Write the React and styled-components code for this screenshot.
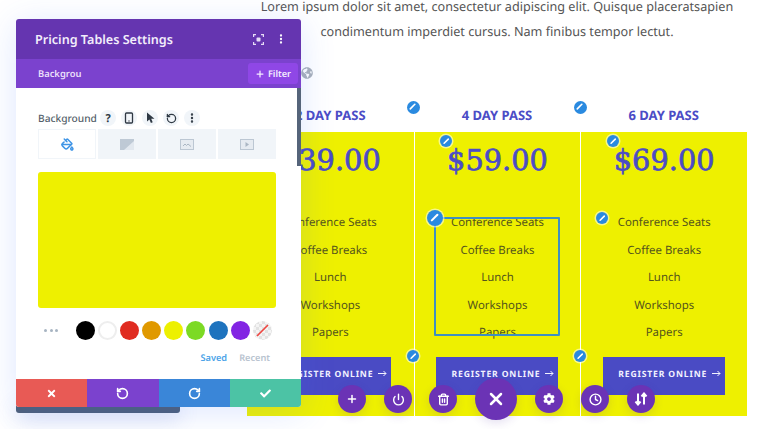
import React from 'react';
import styled, { createGlobalStyle } from 'styled-components';
import { Plus, Power, Trash2, X, Clock, RotateCcw, RotateCw, Smartphone, MoreVertical, PaintBucket } from 'lucide-react';
import { FaGlobeAmericas, FaCog, FaTimes, FaCheck } from 'react-icons/fa';

const Global = createGlobalStyle`
  html, body { margin: 0; padding: 0; background: #fff; }
  body { width: 768px; height: 429px; overflow: hidden; font-family: "Noto Sans", sans-serif; text-rendering: geometricPrecision; }
`;
const Page = styled.div`
  position: relative;
  width: 768px;
  height: 429px;
  overflow: hidden;
  padding-left: 247px;
  box-sizing: border-box;
`;
const Content = styled.main`
  width: 500px;
  display: flex;
  flex-direction: column;
`;
const Intro = styled.div`
  display: flex;
  flex-direction: column;
  gap: 13px;
  font-size: 12.65px;
  line-height: 12px;
  color: #555;
  text-align: center;
  white-space: nowrap;
`;
const IntroLine = styled.p`
  margin: 0;
`;
const Heads = styled.div`
  display: grid;
  grid-template-columns: repeat(3, 1fr);
  margin-top: 52px;
  height: 43px;
  align-items: center;
`;
const Head = styled.h3`
  margin: 8px 0 0;
  font-size: 13px;
  font-weight: 700;
  color: #4b4cc6;
  text-align: center;
`;
const Table = styled.div`
  display: grid;
  grid-template-columns: repeat(3, 1fr);
  height: 284px;
  background: #eef000;
`;
const Column = styled.div`
  display: flex;
  flex-direction: column;
  align-items: center;
  border-left: ${p => (p.$first ? 'none' : '1px solid #fff')};
`;
const Price = styled.div`
  margin-top: 11px;
  height: 34px;
  font-family: "DejaVu Serif", serif;
  font-size: 28.8px;
  line-height: 34px;
  font-weight: 400;
  -webkit-text-stroke: 0.7px #4b4cc6;
  color: #4b4cc6;
`;
const Features = styled.ul`
  list-style: none;
  margin: 32px 0 0;
  padding: 0;
  text-align: center;
`;
const Feature = styled.li`
  height: 27.5px;
  line-height: 27.5px;
  font-size: 11.4px;
  color: #55551c;
  white-space: nowrap;
`;
const Register = styled.div`
  margin-top: 10px;
  width: 122px;
  height: 38px;
  box-sizing: border-box;
  padding: 0 4px 4px 0;
  background: #4a4bc4;
  color: #f2f2ff;
  display: flex;
  align-items: center;
  justify-content: flex-end;
  gap: 5px;
  font-size: 8.6px;
  font-weight: 700;
  letter-spacing: 0.85px;
  white-space: nowrap;
`;
const Arrow = styled.svg`
  flex: none;
`;

const Pin = styled.span`
  position: absolute;
  left: ${p => p.$x - p.$size / 2}px;
  top: ${p => p.$y - p.$size / 2}px;
  width: ${p => p.$size}px;
  height: ${p => p.$size}px;
  border-radius: 50%;
  background: #2a8ae0;
  box-shadow: 0 0 0 1.5px rgba(255, 255, 255, .55);
  display: flex;
  align-items: center;
  justify-content: center;
`;
const SelectBox = styled.div`
  position: absolute;
  left: 434px;
  top: 217px;
  width: 122px;
  height: 115px;
  border: 2px solid #3f8fc0;
  border-radius: 1px;
`;
const Fab = styled.span`
  position: absolute;
  left: ${p => p.$x - p.$size / 2}px;
  top: ${p => p.$y - p.$size / 2}px;
  width: ${p => p.$size}px;
  height: ${p => p.$size}px;
  border-radius: 50%;
  background: #6b33b5;
  color: #fff;
  display: flex;
  align-items: center;
  justify-content: center;
  box-shadow: 0 3px 10px rgba(80, 50, 160, .15);
`;

const GlobeBadge = styled.span`
  position: absolute;
  left: 292px;
  top: 59px;
  width: 28px;
  height: 28px;
  border-radius: 50%;
  background: #fff;
  color: #a9b0b9;
  display: flex;
  align-items: center;
  justify-content: flex-end;
  padding-right: 7px;
  box-sizing: border-box;
`;
const Under = styled.div`
  position: absolute;
  left: 16px;
  top: 400px;
  width: 164px;
  height: 13px;
  border-radius: 3px;
  background: #4e5f78;
  box-shadow: 0 6px 20px rgba(60, 90, 200, .2);
`;
const Panel = styled.section`
  position: absolute;
  left: 16px;
  top: 19px;
  width: 285px;
  height: 388px;
  display: flex;
  flex-direction: column;
  background: #fff;
  border-radius: 3px;
  box-shadow: 0 5px 34px rgba(60, 110, 255, .17);
`;
const TitleBar = styled.header`
  height: 40px;
  flex: none;
  background: #6535b0;
  border-radius: 3px 3px 0 0;
  color: #fff;
  display: flex;
  align-items: center;
  padding: 0 14px 0 19px;
`;
const Title = styled.h2`
  margin: 0;
  flex: 1;
  font-size: 12.6px;
  font-weight: 600;
  color: #f2edfb;
`;
const TitleIcons = styled.div`
  display: flex;
  align-items: center;
  gap: 11px;
`;
const TabBar = styled.div`
  height: 29px;
  flex: none;
  background: #7b42ce;
  display: flex;
  align-items: center;
  justify-content: space-between;
  padding: 0 3px 0 22px;
`;
const TabName = styled.span`
  font-size: 9.4px;
  font-weight: 600;
  color: #eadffa;
`;
const FilterBtn = styled.span`
  width: 50px;
  height: 21px;
  background: #8f47e6;
  border-radius: 3px;
  color: #f4ecff;
  font-size: 9.2px;
  font-weight: 600;
  display: flex;
  align-items: center;
  justify-content: center;
  gap: 3px;
`;
const Body = styled.div`
  position: relative;
  flex: 1;
  padding: 0 25px 0 22px;
  display: flex;
  flex-direction: column;
`;
const Scrollbar = styled.span`
  position: absolute;
  right: 0;
  top: 0;
  width: 4px;
  height: 78px;
  background: #55647a;
`;
const LabelRow = styled.div`
  margin-top: 20px;
  height: 20px;
  display: flex;
  align-items: center;
`;
const Label = styled.span`
  width: 62px;
  font-size: 10.2px;
  font-weight: 500;
  color: #555f6b;
`;
const Hint = styled.span`
  width: 16px;
  height: 16px;
  border-radius: 50%;
  background: #f1f5f9;
  color: #2f3944;
  margin-right: 5px;
  font-size: 11px;
  font-weight: 700;
  display: flex;
  align-items: center;
  justify-content: center;
`;
const Tabs = styled.div`
  margin-top: 1px;
  display: grid;
  grid-template-columns: repeat(4, 1fr);
  gap: 2px;
  height: 30px;
`;
const TabCell = styled.span`
  background: ${p => (p.$on ? '#fff' : '#f1f5f9')};
  box-shadow: ${p => (p.$on ? 'inset 0 0 0 1px #f1f5f9' : 'none')};
  display: flex;
  align-items: center;
  justify-content: center;
`;
const Preview = styled.div`
  margin-top: 13px;
  height: 136px;
  background: #eef000;
  border-radius: 3px;
`;
const Swatches = styled.div`
  margin-top: 12px;
  height: 20px;
  display: flex;
  align-items: center;
`;
const Dots = styled.span`
  width: 37.500px;
  padding-left: 6px;
  box-sizing: border-box;
  display: flex;
  gap: 2.5px;
  & > i { width: 3px; height: 3px; border-radius: 50%; background: #a7b4c2; }
`;
const Swatch = styled.span`
  width: 19px;
  height: 19px;
  margin-right: 3.2px;
  border-radius: 50%;
  flex: none;
  box-sizing: border-box;
  background: ${p => p.$c};
  border: ${p => (p.$c === '#fff' ? '2px solid #eeeeee' : 'none')};
`;
const NoColor = styled(Swatch)`
  background: repeating-conic-gradient(#e2e2e2 0 25%, #f4f4f4 0 50%) 0 0 / 6px 6px;
  display: flex;
  align-items: center;
  justify-content: center;
`;
const SwatchTabs = styled.div`
  margin-top: 11px;
  padding-right: 6px;
  display: flex;
  justify-content: flex-end;
  gap: 12px;
  font-size: 9.2px;
  font-weight: 600;
`;
const SwatchTab = styled.span`
  color: ${p => (p.$on ? '#4ba3e8' : '#b8c3cf')};
`;
const Footer = styled.footer`
  height: 28px;
  flex: none;
  display: grid;
  grid-template-columns: repeat(4, 1fr);
  border-radius: 0 0 3px 3px;
  overflow: hidden;
`;
const FooterBtn = styled.span`
  background: ${p => p.$c};
  color: #fff;
  display: flex;
  align-items: center;
  justify-content: center;
`;

const PencilMark = ({ s }) => (
  <svg width={s} height={s} viewBox="0 0 12 12">
    <path d="M3 9 L9 3" stroke="#fff" strokeWidth="2.2" strokeLinecap="round" />
  </svg>
);
const FocusIcon = () => (
  <svg width="11" height="11" viewBox="0 0 11 11" fill="none" stroke="#e6dcf6" strokeWidth="1.2">
    <path d="M.6 3V.6H3M8 .6h2.400V3M10.400 8v2.400H8M3 10.400H.6V8" />
    <rect x="3.500" y="3.500" width="4" height="4" rx="1" fill="#e6dcf6" stroke="none" />
  </svg>
);
const GradientIcon = () => (
  <svg width="14" height="11" viewBox="0 0 14 11">
    <rect width="14" height="11" fill="#e2e8ef" />
    <path d="M0 0H14V2L4 11H0z" fill="#bec9d5" />
  </svg>
);
const ImageIcon = () => (
  <svg width="14" height="11" viewBox="0 0 14 11" fill="none">
    <rect x=".5" y=".5" width="13" height="10" stroke="#bcc7d3" fill="#e6ebf1" />
    <path d="M3 7l2-2 1.5 1.5L8 5l3 2.500" stroke="#aab6c3" />
  </svg>
);
const VideoIcon = () => (
  <svg width="14" height="11" viewBox="0 0 14 11" fill="none">
    <rect x=".5" y=".5" width="13" height="10" stroke="#bcc7d3" fill="#e6ebf1" />
    <path d="M5.500 3v5l3.500-2.500z" fill="#aab6c3" />
  </svg>
);
const Pointer = () => (
  <svg width="11" height="12" viewBox="0 0 11 12">
    <path d="M2 .5v9l2.400-2 1.500 3.500 1.800-.8-1.500-3.400H9.500z" fill="#2f3944" />
  </svg>
);
const SortIcon = () => (
  <svg width="14" height="14" viewBox="0 0 14 14" fill="none" stroke="#fff" strokeWidth="2">
    <path d="M4 1.500V12M1.500 9.500L4 12.500l2.500-3" />
    <path d="M10 12.500V2M7.500 4.500L10 1.500l2.500 3" />
  </svg>
);

const plans = [
  { name: '2 DAY PASS', price: '$39.00' },
  { name: '4 DAY PASS', price: '$59.00' },
  { name: '6 DAY PASS', price: '$69.00' },
];
const features = ['Conference Seats', 'Coffee Breaks', 'Lunch', 'Workshops', 'Papers'];
const pins = [
  [413, 107, 13], [580, 107, 13], [446, 141, 12], [613, 141, 12],
  [435, 218, 16], [602, 218, 12], [413, 356, 12], [580, 356, 12],
];
const colors = ['#000', '#fff', '#e02b20', '#e09900', '#edf000', '#7cda24', '#1e73be', '#8224e3'];

export default function App() {
  return (
    <Page>
      <Global />
      <Content>
        <Intro>
          <IntroLine>Lorem ipsum dolor sit amet, consectetur adipiscing elit. Quisque placeratsapien</IntroLine>
          <IntroLine>condimentum imperdiet cursus. Nam finibus tempor lectut.</IntroLine>
        </Intro>
        <Heads>
          {plans.map(p => <Head key={p.name}>{p.name}</Head>)}
        </Heads>
        <Table>
          {plans.map((p, i) => (
            <Column key={p.name} $first={i === 0}>
              <Price>{p.price}</Price>
              <Features>
                {features.map(f => <Feature key={f}>{f}</Feature>)}
              </Features>
              <Register>
                REGISTER ONLINE
                <Arrow width="9" height="7" viewBox="0 0 9 7" fill="none" stroke="#f2f2ff" strokeWidth="1">
                  <path d="M0 3.500H8M5.500 1L8 3.500 5.500 6" />
                </Arrow>
              </Register>
            </Column>
          ))}
        </Table>
      </Content>

      <SelectBox />
      {pins.map(([x, y, s]) => (
        <Pin key={`${x}-${y}`} $x={x} $y={y} $size={s}><PencilMark s={s * 0.7} /></Pin>
      ))}

      <Fab $x={352} $y={399} $size={28}><Plus size={12} strokeWidth={3} /></Fab>
      <Fab $x={398} $y={399} $size={28}><Power size={13} strokeWidth={2.6} /></Fab>
      <Fab $x={443} $y={399} $size={28}><Trash2 size={13} strokeWidth={2.6} /></Fab>
      <Fab $x={496} $y={399} $size={42}><X size={20} strokeWidth={3} /></Fab>
      <Fab $x={549} $y={399} $size={28}><FaCog size={12} /></Fab>
      <Fab $x={595} $y={399} $size={28}><Clock size={13} strokeWidth={2.6} /></Fab>
      <Fab $x={641} $y={399} $size={28}><SortIcon /></Fab>

      <GlobeBadge><FaGlobeAmericas size={12} /></GlobeBadge>
      <Under />
      <Panel>
        <TitleBar>
          <Title>Pricing Tables Settings</Title>
          <TitleIcons>
            <FocusIcon />
            <MoreVertical size={12} strokeWidth={2.6} />
          </TitleIcons>
        </TitleBar>
        <TabBar>
          <TabName>Backgrou</TabName>
          <FilterBtn><Plus size={10} strokeWidth={3} />Filter</FilterBtn>
        </TabBar>
        <Body>
          <Scrollbar />
          <LabelRow>
            <Label>Background</Label>
            <Hint>?</Hint>
            <Hint><Smartphone size={12} strokeWidth={2.6} /></Hint>
            <Hint><Pointer /></Hint>
            <Hint><RotateCcw size={11} strokeWidth={2.8} /></Hint>
            <Hint><MoreVertical size={12} strokeWidth={2.8} /></Hint>
          </LabelRow>
          <Tabs>
            <TabCell $on><PaintBucket size={13} color="#3f95e6" strokeWidth={2.8} /></TabCell>
            <TabCell><GradientIcon /></TabCell>
            <TabCell><ImageIcon /></TabCell>
            <TabCell><VideoIcon /></TabCell>
          </Tabs>
          <Preview />
          <Swatches>
            <Dots><i /><i /><i /></Dots>
            {colors.map(c => <Swatch key={c} $c={c} />)}
            <NoColor $c="#eee">
              <svg width="19" height="19" viewBox="0 0 19 19">
                <path d="M4 15L15 4" stroke="#f0453f" strokeWidth="1.6" />
              </svg>
            </NoColor>
          </Swatches>
          <SwatchTabs>
            <SwatchTab $on>Saved</SwatchTab>
            <SwatchTab>Recent</SwatchTab>
          </SwatchTabs>
        </Body>
        <Footer>
          <FooterBtn $c="#e85a55"><FaTimes size={11} /></FooterBtn>
          <FooterBtn $c="#7b42ce"><RotateCcw size={13} strokeWidth={3} /></FooterBtn>
          <FooterBtn $c="#3a86d8"><RotateCw size={13} strokeWidth={3} /></FooterBtn>
          <FooterBtn $c="#4cc3a5"><FaCheck size={11} /></FooterBtn>
        </Footer>
      </Panel>
    </Page>
  );
}
